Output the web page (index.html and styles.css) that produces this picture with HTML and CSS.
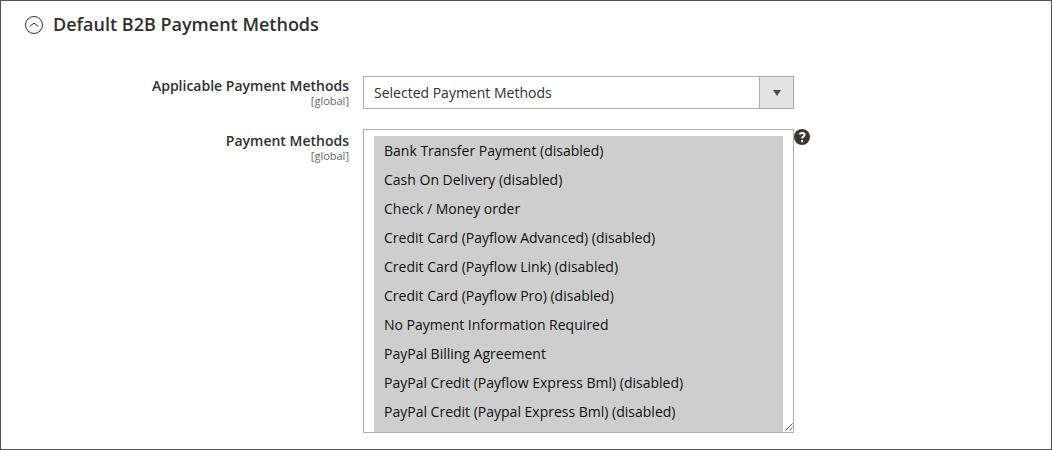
FILE: index.html
```html
<!DOCTYPE html>
<html lang="en">
<head>
<meta charset="utf-8">
<title>Default B2B Payment Methods</title>
<link rel="stylesheet" href="styles.css">
</head>
<body>
<main class="section">
  <h1 class="section-title">
    <button class="section-toggle" type="button" aria-expanded="true">
      <svg class="toggle-icon" viewBox="0 0 18 18" aria-hidden="true"><circle cx="9" cy="9" r="8.5"/><path d="M4.8 10.3 9 7.1l4.2 3.2"/></svg>
      <span>Default B2B Payment Methods</span>
    </button>
  </h1>
  <form class="fields">
    <div class="field">
      <label class="field-label" for="applicable">Applicable Payment Methods <span class="scope">[global]</span></label>
      <div class="dropdown">
        <select class="dropdown-select" id="applicable">
          <option selected>Selected Payment Methods</option>
        </select>
        <svg class="dropdown-arrow" viewBox="0 0 8 6" aria-hidden="true"><path d="M0 0h8L4 6z"/></svg>
      </div>
    </div>
    <div class="field">
      <label class="field-label field-label-list" for="methods">Payment Methods <span class="scope">[global]</span></label>
      <div class="listbox">
        <select class="listbox-select" id="methods" multiple size="10">
          <option selected>Bank Transfer Payment (disabled)</option>
          <option selected>Cash On Delivery (disabled)</option>
          <option selected>Check / Money order</option>
          <option selected>Credit Card (Payflow Advanced) (disabled)</option>
          <option selected>Credit Card (Payflow Link) (disabled)</option>
          <option selected>Credit Card (Payflow Pro) (disabled)</option>
          <option selected>No Payment Information Required</option>
          <option selected>PayPal Billing Agreement</option>
          <option selected>PayPal Credit (Payflow Express Bml) (disabled)</option>
          <option selected>PayPal Credit (Paypal Express Bml) (disabled)</option>
        </select>
        <svg class="resize-grip" viewBox="0 0 8 8" aria-hidden="true"><path d="M.5 7.5l7-7M4.5 7.5l3-3"/></svg>
      </div>
      <button class="help" type="button" aria-label="Help">
        <svg class="help-icon" viewBox="0 0 16 16" aria-hidden="true"><circle cx="8" cy="8" r="8"/><path d="M5.4 5.2C6.4 3.6 10.6 3.4 10.6 5.8c0 1.8-2.5 1.7-2.5 3.8M8.1 11v2.2"/></svg>
      </button>
    </div>
  </form>
</main>
</body>
</html>
```
FILE: styles.css
```css
* {
  box-sizing: border-box;
}

body {
  margin: 0;
  background: #fff;
  color: #303030;
  font: 14px/20px "Open Sans", "Noto Sans", sans-serif;
}

.section {
  min-height: 100vh;
  padding: 12px 24px 16px;
  border: 1px solid #4a5560;
}

.section-title {
  margin: 0;
  font: inherit;
}

.section-toggle {
  display: flex;
  align-items: center;
  gap: 10px;
  padding: 0;
  border: 0;
  background: none;
  color: inherit;
  font: 600 18px/22px "Open Sans", "Noto Sans", sans-serif;
  cursor: pointer;
}

.toggle-icon {
  width: 18px;
  height: 18px;
  margin-top: 2px;
  fill: none;
  stroke: #303030;
}

.fields {
  display: grid;
  gap: 20px;
  margin-top: 41px;
}

.field {
  display: grid;
  grid-template-columns: 338fr 431fr 233fr;
  align-items: start;
}

.field-label {
  padding: 1px 14px 0 0;
  font-weight: 600;
  line-height: 18px;
  text-align: right;
}

.field-label-list {
  padding-top: 3px;
}

.scope {
  display: block;
  color: #666;
  font-size: 11px;
  font-weight: 400;
  line-height: 12px;
}

.dropdown,
.listbox {
  position: relative;
}

.dropdown-select {
  display: block;
  width: 100%;
  height: 33px;
  padding: 0 44px 0 10px;
  border: 1px solid #adadad;
  border-radius: 0;
  appearance: none;
  background: linear-gradient(to right, #adadad 1px, #e3e3e3 1px) right / 34px 100% no-repeat #fff;
  color: #303030;
  font: inherit;
}

.dropdown-arrow {
  position: absolute;
  top: 14px;
  right: 13px;
  width: 8px;
  height: 6px;
  fill: #514943;
  pointer-events: none;
}

.listbox-select {
  display: block;
  width: 100%;
  height: 304px;
  padding: 6px 10px 0;
  border: 1px solid #adadad;
  border-radius: 0;
  appearance: none;
  background: #fff;
  font: inherit;
  overflow: hidden;
}

.listbox-select option {
  min-height: 29px;
  padding: 5px 10px 4px;
  background: linear-gradient(#cecece, #cecece);
  color: #111;
  line-height: 20px;
}

.listbox-select option:last-child {
  padding-bottom: 11px;
}

.resize-grip {
  position: absolute;
  right: 1px;
  bottom: 2px;
  width: 8px;
  height: 8px;
  fill: none;
  stroke: #555;
  pointer-events: none;
}

.help {
  width: 16px;
  height: 16px;
  padding: 0;
  border: 0;
  background: none;
}

.help-icon {
  display: block;
  width: 16px;
  height: 16px;
  fill: #41362f;
}

.help-icon path {
  fill: none;
  stroke: #fff;
  stroke-width: 2;
}
```
